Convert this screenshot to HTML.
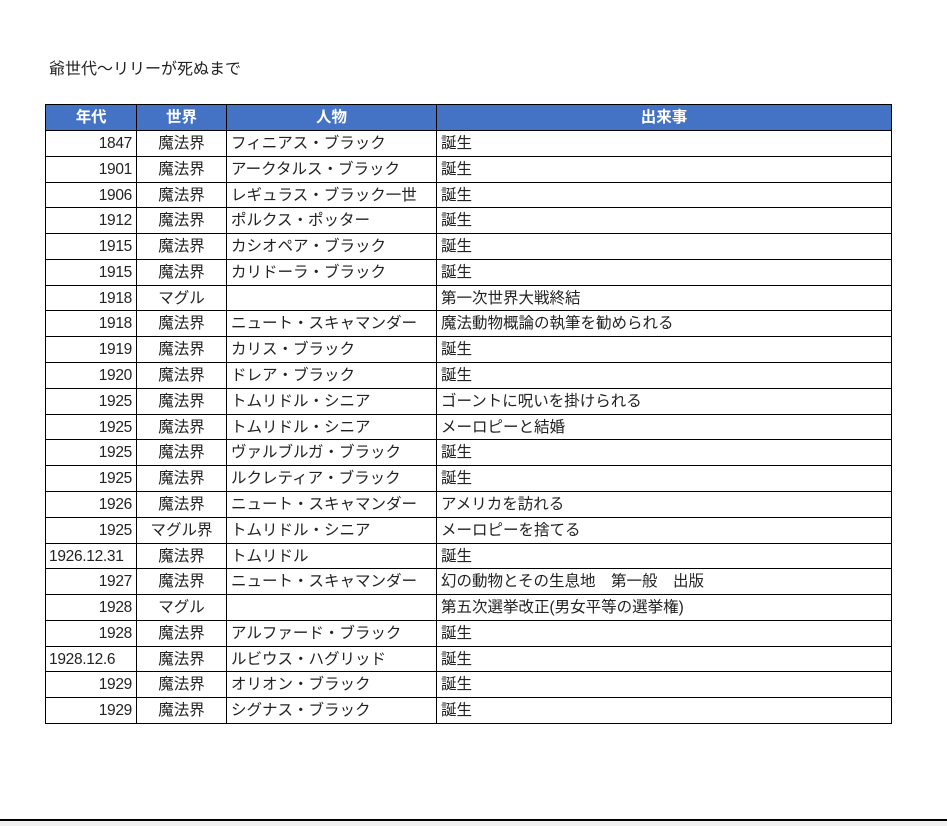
<!DOCTYPE html>
<html><head><meta charset="utf-8"><style>
html,body{margin:0;padding:0;background:#fff;width:947px;height:826px;overflow:hidden;position:relative;font-family:"Liberation Sans","Noto Sans CJK JP",sans-serif;color:#222}
.t{position:absolute;left:49px;top:55px;font-size:16px}
.r{position:absolute;left:45px;width:847px;display:flex;box-sizing:border-box}
.r div{box-sizing:border-box;border-left:1px solid #000;font-size:15.5px;line-height:25px;white-space:nowrap;overflow:hidden;padding:0 4px}
.c1{width:91px;text-align:right;letter-spacing:-0.3px}
.c2{width:90px;text-align:center}
.c3{width:210px}
.c4{width:456px;border-right:1px solid #000}
.h div{background:#4472c4;color:#fff;font-weight:bold;text-align:center}
.line{position:absolute;left:45px;width:847px;height:1px;background:#000}
.bot{position:absolute;left:0;top:819px;width:947px;height:2px;background:#000}
.gray{position:absolute;left:0;top:821px;width:947px;height:5px;background:#f0f0f0}
</style></head><body>
<div class="t">爺世代～リリーが死ぬまで</div>
<div id="tb"></div>
<div class="bot"></div><div class="gray"></div>
<script>
var rows=[["1847","魔法界","フィニアス・ブラック","誕生"],["1901","魔法界","アークタルス・ブラック","誕生"],["1906","魔法界","レギュラス・ブラック一世","誕生"],["1912","魔法界","ポルクス・ポッター","誕生"],["1915","魔法界","カシオペア・ブラック","誕生"],["1915","魔法界","カリドーラ・ブラック","誕生"],["1918","マグル","","第一次世界大戦終結"],["1918","魔法界","ニュート・スキャマンダー","魔法動物概論の執筆を勧められる"],["1919","魔法界","カリス・ブラック","誕生"],["1920","魔法界","ドレア・ブラック","誕生"],["1925","魔法界","トムリドル・シニア","ゴーントに呪いを掛けられる"],["1925","魔法界","トムリドル・シニア","メーロピーと結婚"],["1925","魔法界","ヴァルブルガ・ブラック","誕生"],["1925","魔法界","ルクレティア・ブラック","誕生"],["1926","魔法界","ニュート・スキャマンダー","アメリカを訪れる"],["1925","マグル界","トムリドル・シニア","メーロピーを捨てる"],["1926.12.31","魔法界","トムリドル","誕生"],["1927","魔法界","ニュート・スキャマンダー","幻の動物とその生息地　第一般　出版"],["1928","マグル","","第五次選挙改正(男女平等の選挙権)"],["1928","魔法界","アルファード・ブラック","誕生"],["1928.12.6","魔法界","ルビウス・ハグリッド","誕生"],["1929","魔法界","オリオン・ブラック","誕生"],["1929","魔法界","シグナス・ブラック","誕生"]];
var h='<div class="line" style="top:104px"></div><div class="r h" style="top:105px;height:25px"><div class="c1">年代</div><div class="c2">世界</div><div class="c3">人物</div><div class="c4">出来事</div></div>';
var step=(723-130)/23;
for(var i=0;i<rows.length;i++){var t=Math.round(130+i*step),b=Math.round(130+(i+1)*step);var r=rows[i];
var al=r[0].indexOf('.')>=0?' style="text-align:left;padding-left:3px"':'';
h+='<div class="line" style="top:'+t+'px"></div><div class="r" style="top:'+(t+1)+'px;height:'+(b-t-1)+'px"><div class="c1"'+al+'>'+r[0]+'</div><div class="c2">'+r[1]+'</div><div class="c3">'+r[2]+'</div><div class="c4">'+r[3]+'</div></div>';}
h+='<div class="line" style="top:723px"></div>';
document.getElementById('tb').innerHTML=h;
</script>
</body></html>
